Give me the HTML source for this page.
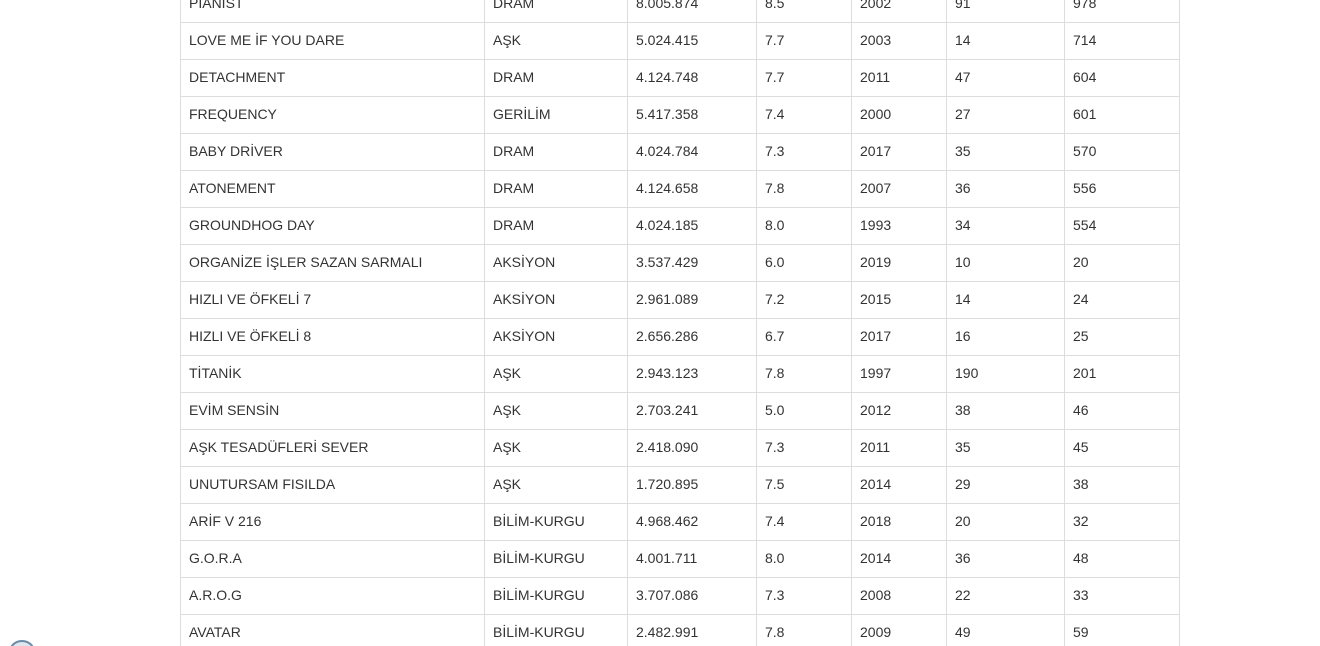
<!DOCTYPE html>
<html><head><meta charset="utf-8"><style>
html,body{margin:0;padding:0;background:#fff;width:1320px;height:646px;overflow:hidden;position:relative}
table{position:absolute;left:180px;top:-15px;border-collapse:collapse;font-family:"Liberation Sans",Arial,sans-serif;font-size:14px;color:#333}
td{border:1px solid #ddd;height:34px;padding:0 8px 2px;line-height:20px;vertical-align:middle;box-sizing:content-box}
.c{position:absolute;left:8px;top:640px;width:28px;height:28px;border-radius:50%;border:2px solid #6a8aa6;background:#dfe7ee;box-sizing:border-box}
</style></head><body>
<table>
<colgroup><col style="width:304px"><col style="width:143px"><col style="width:129px"><col style="width:95px"><col style="width:95px"><col style="width:118px"><col style="width:115px"></colgroup>
<tr><td>PIANIST</td><td>DRAM</td><td>8.005.874</td><td>8.5</td><td>2002</td><td>91</td><td>978</td></tr>
<tr><td>LOVE ME İF YOU DARE</td><td>AŞK</td><td>5.024.415</td><td>7.7</td><td>2003</td><td>14</td><td>714</td></tr>
<tr><td>DETACHMENT</td><td>DRAM</td><td>4.124.748</td><td>7.7</td><td>2011</td><td>47</td><td>604</td></tr>
<tr><td>FREQUENCY</td><td>GERİLİM</td><td>5.417.358</td><td>7.4</td><td>2000</td><td>27</td><td>601</td></tr>
<tr><td>BABY DRİVER</td><td>DRAM</td><td>4.024.784</td><td>7.3</td><td>2017</td><td>35</td><td>570</td></tr>
<tr><td>ATONEMENT</td><td>DRAM</td><td>4.124.658</td><td>7.8</td><td>2007</td><td>36</td><td>556</td></tr>
<tr><td>GROUNDHOG DAY</td><td>DRAM</td><td>4.024.185</td><td>8.0</td><td>1993</td><td>34</td><td>554</td></tr>
<tr><td>ORGANİZE İŞLER SAZAN SARMALI</td><td>AKSİYON</td><td>3.537.429</td><td>6.0</td><td>2019</td><td>10</td><td>20</td></tr>
<tr><td>HIZLI VE ÖFKELİ 7</td><td>AKSİYON</td><td>2.961.089</td><td>7.2</td><td>2015</td><td>14</td><td>24</td></tr>
<tr><td>HIZLI VE ÖFKELİ 8</td><td>AKSİYON</td><td>2.656.286</td><td>6.7</td><td>2017</td><td>16</td><td>25</td></tr>
<tr><td>TİTANİK</td><td>AŞK</td><td>2.943.123</td><td>7.8</td><td>1997</td><td>190</td><td>201</td></tr>
<tr><td>EVİM SENSİN</td><td>AŞK</td><td>2.703.241</td><td>5.0</td><td>2012</td><td>38</td><td>46</td></tr>
<tr><td>AŞK TESADÜFLERİ SEVER</td><td>AŞK</td><td>2.418.090</td><td>7.3</td><td>2011</td><td>35</td><td>45</td></tr>
<tr><td>UNUTURSAM FISILDA</td><td>AŞK</td><td>1.720.895</td><td>7.5</td><td>2014</td><td>29</td><td>38</td></tr>
<tr><td>ARİF V 216</td><td>BİLİM-KURGU</td><td>4.968.462</td><td>7.4</td><td>2018</td><td>20</td><td>32</td></tr>
<tr><td>G.O.R.A</td><td>BİLİM-KURGU</td><td>4.001.711</td><td>8.0</td><td>2014</td><td>36</td><td>48</td></tr>
<tr><td>A.R.O.G</td><td>BİLİM-KURGU</td><td>3.707.086</td><td>7.3</td><td>2008</td><td>22</td><td>33</td></tr>
<tr><td>AVATAR</td><td>BİLİM-KURGU</td><td>2.482.991</td><td>7.8</td><td>2009</td><td>49</td><td>59</td></tr>
</table>
<div class="c"></div>
</body></html>
